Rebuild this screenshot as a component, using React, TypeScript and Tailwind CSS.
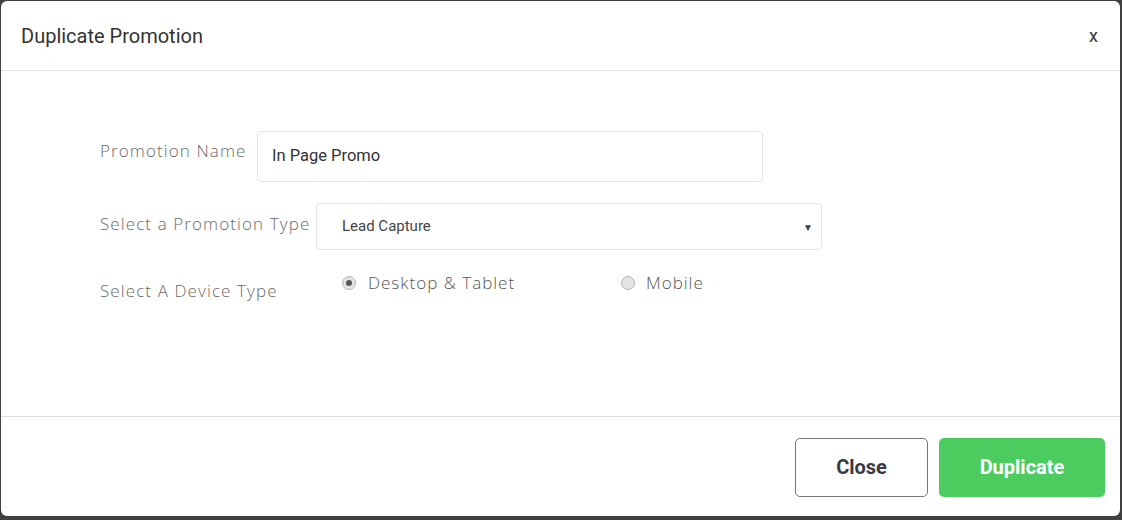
import React from "react";

const labelFont = { fontFamily: '"Open Sans", "Lato", sans-serif' };

function Radio({ checked }: { checked?: boolean }) {
  return (
    <span className="flex h-[14px] w-[14px] items-center justify-center rounded-full border border-[#b5b5b5] bg-[#e4e4e4]">
      {checked && <span className="h-[6px] w-[6px] rounded-full bg-[#555]" />}
    </span>
  );
}

export default function App() {
  return (
    <div className="h-[520px] w-[1122px] bg-[#404040] pl-[1px] pt-[1px] font-['Roboto',sans-serif]">
      <div className="flex h-[515px] w-[1119px] flex-col rounded-md bg-white">
        {/* header */}
        <div className="flex h-[70px] items-center justify-between border-b border-[#e6e6e6] pl-[20px] pr-[22px]">
          <h1 className="pt-[1px] text-[20px] font-normal text-[#333]">Duplicate Promotion</h1>
          <button className="text-[18px] leading-none text-[#333]">x</button>
        </div>

        {/* body */}
        <div className="flex-1 pl-[99px] pt-[60px]">
          <div className="flex items-start">
            <label className="mt-[7px] w-[157px] text-[17px] font-light tracking-[1.1px] text-[#6a6a6a]" style={labelFont}>
              Promotion Name
            </label>
            <div className="flex h-[51px] w-[506px] items-center rounded border border-[#e4e4e4] px-[14px] text-[16.5px] text-[#333]">
              In Page Promo
            </div>
          </div>

          <div className="mt-[21px] flex items-start">
            <label className="mt-[8px] w-[216px] text-[17px] font-light tracking-[1.1px] text-[#6a6a6a]" style={labelFont}>
              Select a Promotion Type
            </label>
            <div className="relative flex h-[47px] w-[506px] items-center rounded border border-[#e4e4e4] pl-[25px] text-[15px] text-[#444]">
              Lead Capture
              <span className="absolute right-[8px] top-[16px] text-[10px] text-[#444]">▼</span>
            </div>
          </div>

          <div className="mt-[23px] flex items-start">
            <label className="mt-[5px] w-[242px] text-[17px] font-light tracking-[1.1px] text-[#6a6a6a]" style={labelFont}>
              Select A Device Type
            </label>
            <div className="-mt-[3px] flex w-[279px] items-center gap-[12px]">
              <Radio checked />
              <span className="text-[17px] font-light tracking-[1px] text-[#555]" style={labelFont}>
                Desktop &amp; Tablet
              </span>
            </div>
            <div className="-mt-[3px] flex items-center gap-[11px]">
              <Radio />
              <span className="text-[17px] font-light tracking-[1px] text-[#555]" style={labelFont}>
                Mobile
              </span>
            </div>
          </div>
        </div>

        {/* footer */}
        <div className="flex h-[100px] items-center justify-end gap-[11px] border-t border-[#dcdcdc] pr-[15px] pt-[1px]">
          <button className="h-[59px] w-[133px] rounded-[5px] border border-[#777] text-[20px] font-bold text-[#3a3a44]">
            Close
          </button>
          <button className="h-[59px] w-[166px] rounded-[5px] bg-[#4ccc5f] text-[20px] font-bold text-white">
            Duplicate
          </button>
        </div>
      </div>
    </div>
  );
}
